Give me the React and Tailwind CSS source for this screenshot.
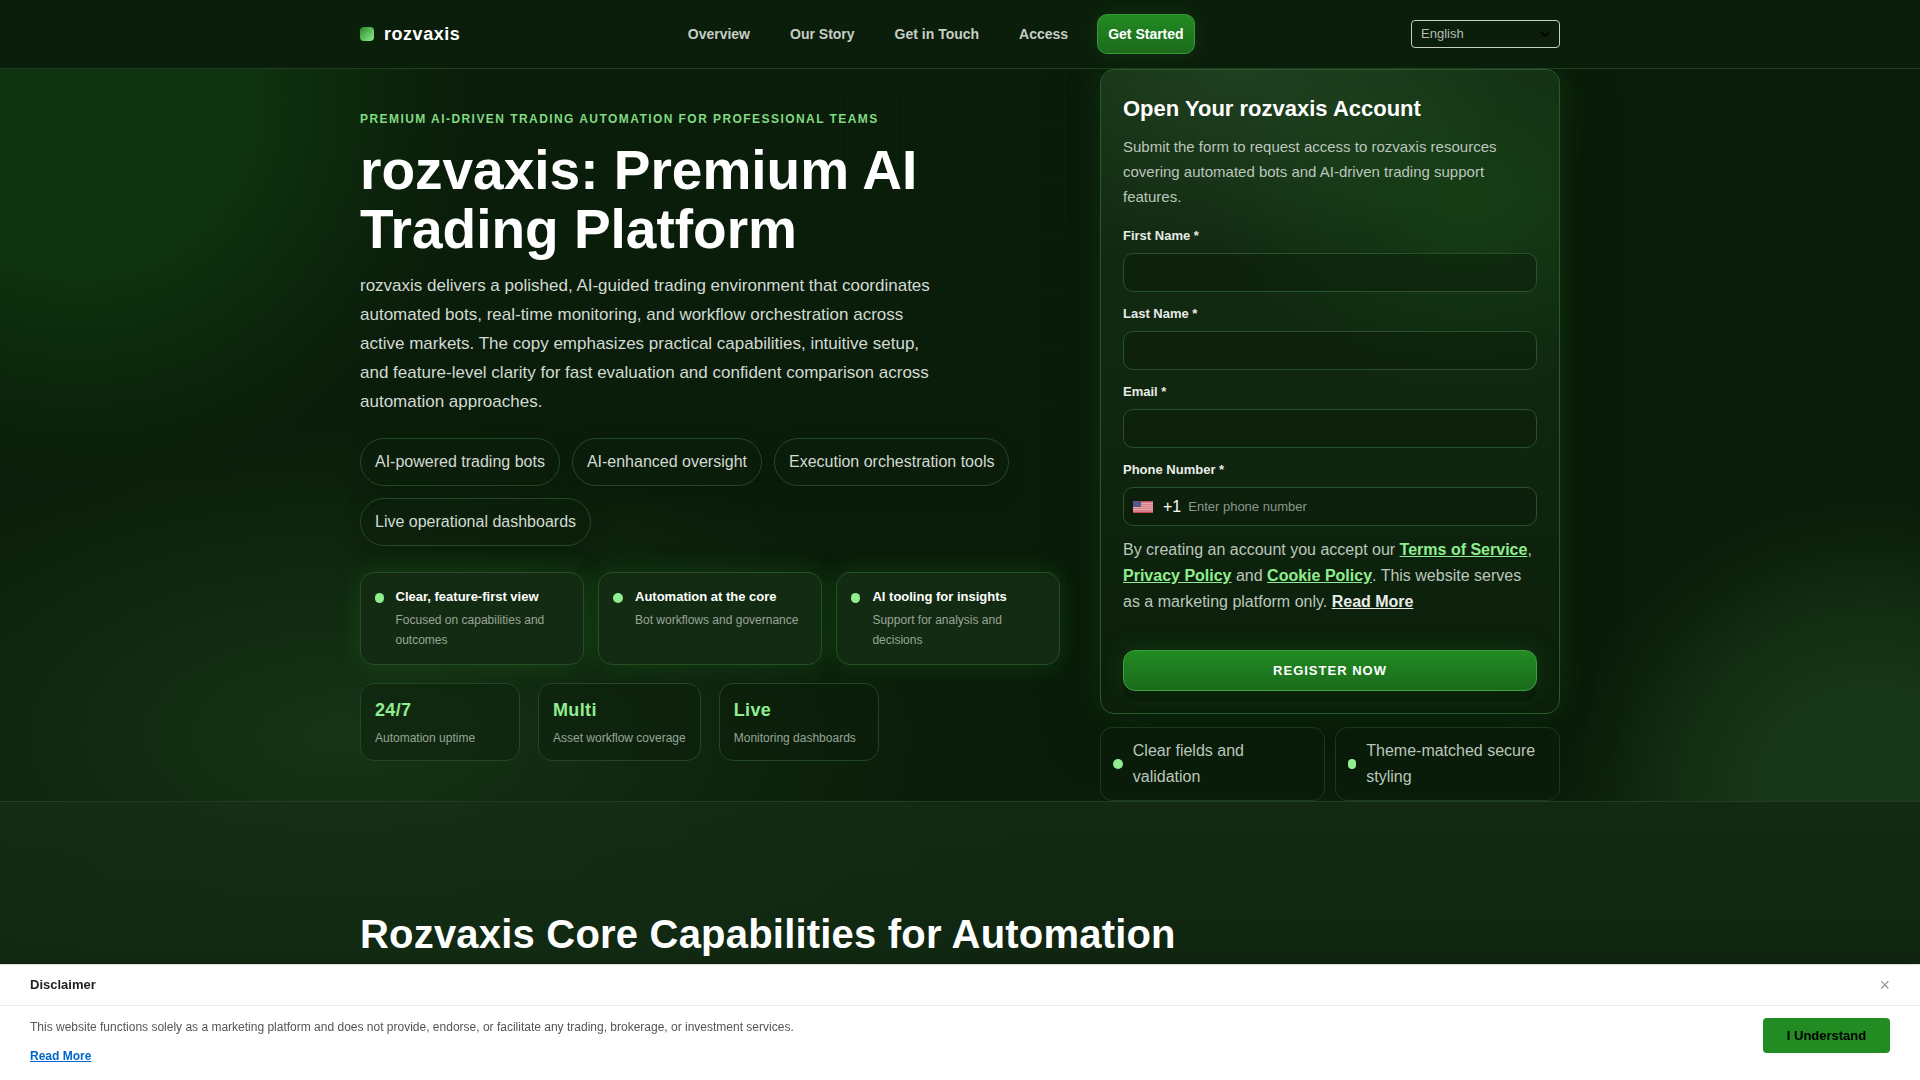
import { useState } from 'react';

const NAV = ['Overview', 'Our Story', 'Get in Touch', 'Access'];

const CHIPS = [
  'AI-powered trading bots',
  'AI-enhanced oversight',
  'Execution orchestration tools',
  'Live operational dashboards',
];

const FEATURES = [
  { title: 'Clear, feature-first view', text: 'Focused on capabilities and outcomes' },
  { title: 'Automation at the core', text: 'Bot workflows and governance' },
  { title: 'AI tooling for insights', text: 'Support for analysis and decisions' },
];

const STATS = [
  { value: '24/7', label: 'Automation uptime' },
  { value: 'Multi', label: 'Asset workflow coverage' },
  { value: 'Live', label: 'Monitoring dashboards' },
];

const FIELDS = [
  { id: 'first-name', label: 'First Name *', type: 'text' },
  { id: 'last-name', label: 'Last Name *', type: 'text' },
  { id: 'email', label: 'Email *', type: 'email' },
];

function FlagUS() {
  return (
    <svg width="20" height="12" viewBox="0 0 20 12" className="shrink-0" aria-hidden="true">
      <rect width="20" height="12" fill="#d9808a"/>
      {[2, 4, 6, 8].map(y => (
        <rect key={y} y={y} width="20" height="1" fill="#e3a3a9"/>
      ))}
      <rect width="20" height="1" fill="#c94a5a"/>
      <rect y="11" width="20" height="1" fill="#c94a5a"/>
      <rect width="8" height="6" fill="#56568c"/>
    </svg>
  );
}

function Header() {
  return (
    <header className="relative z-10 border-b border-[#1f3f1f] bg-[#0b1d0b]">
      <div className="max-w-[1200px] mx-auto h-[68px] flex items-center justify-between">
        <a href="#top" className="flex items-center gap-[10px] text-white text-lg font-bold tracking-[0.03em]">
          <span className="w-[14px] h-[14px] rounded bg-linear-135 from-[#228b22] to-[#90ee90] shadow-[0_0_24px_rgba(34,139,34,0.2)]"/>
          rozvaxis
        </a>
        <nav className="flex items-center gap-[18px] text-sm font-bold text-[#c6cec6]">
          {NAV.map(item => (
            <a key={item} href="#top" className="px-[11px]">{item}</a>
          ))}
          <a href="#register"
            className="h-10 px-[10px] flex items-center rounded-[10px] border border-[#3a9a3a] text-white bg-linear-to-b from-[#228b22] to-[#1b6b1b] shadow-[0_0_24px_rgba(34,139,34,0.2)]">
            Get Started
          </a>
        </nav>
        <div className="relative flex items-center">
          <select aria-label="Language"
            className="appearance-none w-[149px] h-7 pl-[9px] rounded border border-[#c6cec6] bg-transparent text-[13px] text-[#b4bdb4]">
            <option>English</option>
          </select>
          <svg width="10" height="6" viewBox="0 0 10 6" className="absolute right-[10px] pointer-events-none" fill="none" stroke="#000" strokeWidth="1.5">
            <path d="M1 1l4 4 4-4"/>
          </svg>
        </div>
      </div>
    </header>
  );
}

function HeroCopy() {
  return (
    <div>
      <p className="text-xs leading-5 font-bold uppercase tracking-[0.12em] text-[#82d982]">
        Premium AI-driven trading automation for professional teams
      </p>
      <h1 className="mt-3 text-[55px] leading-[59px] font-bold text-white">rozvaxis: Premium AI Trading Platform</h1>
      <p className="mt-3 max-w-xl text-[17px] leading-[29px] text-[#d3dad3]">
        rozvaxis delivers a polished, AI-guided trading environment that coordinates automated bots, real-time
        monitoring, and workflow orchestration across active markets. The copy emphasizes practical capabilities,
        intuitive setup, and feature-level clarity for fast evaluation and confident comparison across automation
        approaches.
      </p>
      <ul className="mt-[22px] flex flex-wrap gap-3">
        {CHIPS.map(chip => (
          <li key={chip} className="px-[14px] py-[11px] leading-6 rounded-full border border-[#234923] bg-[#0a1c0a]/40 text-[#d3dad3] shadow-[0_8px_24px_rgba(0,0,0,0.18)]">
            {chip}
          </li>
        ))}
      </ul>
      <div className="mt-[26px] grid grid-cols-3 gap-[14px]">
        {FEATURES.map(f => (
          <div key={f.title} className="flex gap-3 p-[14px] rounded-[14px] border border-[#245024] bg-[#132b13] shadow-[0_0_24px_rgba(34,139,34,0.26)]">
            <span className="mt-[6px] w-[10px] h-[10px] rounded-full bg-[#90ee90]"/>
            <div>
              <h3 className="text-[13px] leading-5 font-bold text-white">{f.title}</h3>
              <p className="mt-[3px] text-xs leading-5 text-[#98a598]">{f.text}</p>
            </div>
          </div>
        ))}
      </div>
      <div className="mt-[18px] flex gap-[18px]">
        {STATS.map(s => (
          <div key={s.value} className="min-w-40 px-[14px] py-3 rounded-[14px] border border-[#234623] bg-[#0a1c0a]/40">
            <p className="text-lg leading-7 font-bold tracking-[0.02em] text-[#90ee90]">{s.value}</p>
            <p className="mt-1 text-xs leading-5 text-[#98a598]">{s.label}</p>
          </div>
        ))}
      </div>
    </div>
  );
}

function RegisterForm() {
  const link = 'font-bold underline text-[#90ee90]';
  return (
    <form id="register" onSubmit={e => e.preventDefault()}
      className="p-[22px] rounded-[14px] border border-[#2a592a] bg-[radial-gradient(60%_30%_at_30%_0%,rgba(144,238,144,0.1),transparent),radial-gradient(55%_30%_at_80%_20%,rgba(34,139,34,0.2),transparent),linear-gradient(#142d14,#0b1f0b)] shadow-[0_0_34px_rgba(34,139,34,0.24),0_18px_60px_rgba(0,0,0,0.35)]">
      <h2 className="text-[22px] leading-[34px] font-bold text-white">Open Your rozvaxis Account</h2>
      <p className="mt-2 text-[15px] leading-[25px] text-[#bcc6bc]">
        Submit the form to request access to rozvaxis resources covering automated bots and AI-driven trading
        support features.
      </p>
      <div className="mt-[17px] flex flex-col gap-3">
        {FIELDS.map(f => (
          <div key={f.id}>
            <label htmlFor={f.id} className="block text-[13px] leading-5 font-bold text-[#e8ece8]">{f.label}</label>
            <input id={f.id} type={f.type}
              className="mt-[7px] block w-full h-[39px] px-3 rounded-[10px] border border-[#28522a] bg-[#0a1c0a]/50 text-sm text-white outline-none"/>
          </div>
        ))}
        <div>
          <label htmlFor="phone" className="block text-[13px] leading-5 font-bold text-[#e8ece8]">Phone Number *</label>
          <div className="mt-[7px] flex items-center h-[39px] px-[9px] rounded-[10px] border border-[#28522a] bg-[#0a1c0a]/50">
            <FlagUS/>
            <span className="ml-[10px] text-white">+1</span>
            <input id="phone" type="tel" placeholder="Enter phone number"
              className="ml-[7px] flex-1 min-w-0 bg-transparent text-[13px] text-white placeholder:text-[#8b978b] outline-none"/>
          </div>
        </div>
      </div>
      <p className="mt-[11px] leading-[26px] text-[#bcc6bc]">
        By creating an account you accept our <a href="#terms" className={link}>Terms of Service</a>,{' '}
        <a href="#privacy" className={link}>Privacy Policy</a> and{' '}
        <a href="#cookies" className={link}>Cookie Policy</a>. This website serves as a marketing platform only.{' '}
        <a href="#more" className="font-bold underline text-[#e8ece8]">Read More</a>
      </p>
      <button type="submit"
        className="mt-[35px] block w-full h-[41px] rounded-xl border border-[#3fa03f] text-[13px] font-bold tracking-[1px] text-white bg-linear-to-b from-[#228b22] to-[#1b6b1b] shadow-[0_10px_0_rgba(0,0,0,0.2),0_0_26px_rgba(34,139,34,0.24)]">
        REGISTER NOW
      </button>
    </form>
  );
}

function FormNotes() {
  return (
    <div className="mt-[13px] grid grid-cols-2 gap-[10px]">
      {['Clear fields and validation', 'Theme-matched secure styling'].map(note => (
        <div key={note} className="flex items-center gap-[10px] px-3 py-[10px] rounded-xl border border-[#1a3a1c] bg-[#0a1c0a]/60 leading-[26px] text-[#bcc6bc]">
          <span className="w-[10px] h-[10px] rounded-full bg-[#90ee90]"/>
          <span>{note}</span>
        </div>
      ))}
    </div>
  );
}

function Hero() {
  return (
    <section id="top" className="relative overflow-hidden">
      <div className="absolute inset-0 bg-[radial-gradient(circle_400px_at_80px_30px,rgba(34,139,34,0.2)_42%,rgba(34,139,34,0.12)_63%,rgba(34,139,34,0.04)_82%,transparent),radial-gradient(600px_320px_at_340px_666px,rgba(60,120,60,0.26),rgba(60,120,60,0.1)_55%,transparent),radial-gradient(circle_310px_at_1870px_735px,rgba(70,140,70,0.24)_30%,rgba(70,140,70,0.16)_60%,rgba(70,140,70,0.05)_82%,transparent)]"/>
      <div className="absolute inset-0 bg-[linear-gradient(to_right,rgba(144,238,144,0.025)_1px,transparent_1px),linear-gradient(rgba(144,238,144,0.025)_1px,transparent_1px)] bg-size-[56px_56px] mask-[radial-gradient(760px_560px_at_45%_10%,black,transparent)]"/>
      <div className="relative max-w-[1200px] mx-auto grid grid-cols-[1fr_460px] gap-10 items-center">
        <HeroCopy/>
        <div>
          <RegisterForm/>
          <FormNotes/>
        </div>
      </div>
    </section>
  );
}

function Disclaimer({ onClose }) {
  return (
    <aside className="fixed inset-x-0 bottom-0 z-20 border-t border-[#dddddd] bg-white shadow-[0_-2px_10px_rgba(0,0,0,0.15)]">
      <div className="px-[30px] h-[41px] flex items-center justify-between border-b border-[#ebebeb]">
        <h3 className="text-[13px] font-bold text-[#222]">Disclaimer</h3>
        <button type="button" aria-label="Close" onClick={onClose} className="text-lg leading-none text-[#999]">×</button>
      </div>
      <div className="px-[30px] pt-3 h-[74px] flex items-start justify-between">
        <div className="text-xs">
          <p className="leading-[18px] text-[#555]">
            This website functions solely as a marketing platform and does not provide, endorse, or facilitate any
            trading, brokerage, or investment services.
          </p>
          <a href="#more" className="mt-[11px] block font-bold leading-[18px] underline text-[#0066cc]">Read More</a>
        </div>
        <button type="button" onClick={onClose} className="h-[35px] w-[127px] rounded bg-[#228b22] text-[13px] font-bold text-black">
          I Understand
        </button>
      </div>
    </aside>
  );
}

export default function App() {
  const [open, setOpen] = useState(true);

  return (
    <div className="min-h-screen bg-[#0a1d0a] font-['Liberation_Sans',Arial,sans-serif] text-base">
      <Header/>
      <Hero/>
      <section className="border-t border-[#1f3f1f] bg-[radial-gradient(700px_400px_at_340px_0px,rgba(56,112,56,0.08),transparent),linear-gradient(#122912,#0e230f)]">
        <div className="max-w-[1200px] mx-auto pt-[104px] pb-32">
          <h2 className="text-[40px] leading-[56px] font-bold tracking-[0.2px] text-white">
            Rozvaxis Core Capabilities for Automation
          </h2>
        </div>
      </section>
      {open && <Disclaimer onClose={() => setOpen(false)}/>}
    </div>
  );
}
